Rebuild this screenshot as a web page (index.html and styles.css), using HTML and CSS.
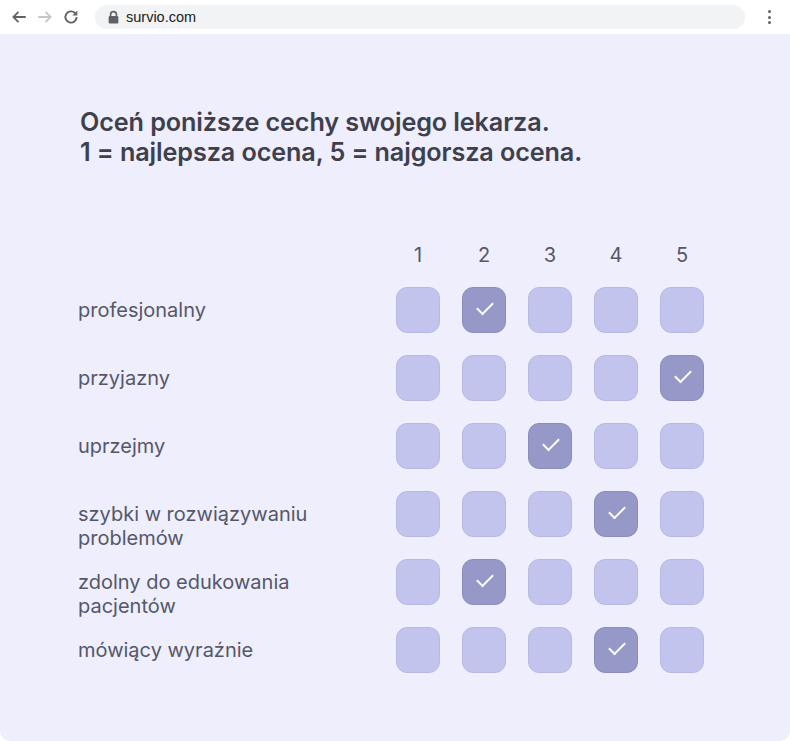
FILE: index.html
```html
<!DOCTYPE html>
<html lang="pl">
<head>
<meta charset="utf-8">
<title>survio.com</title>
<link rel="stylesheet" href="styles.css">
</head>
<body>
<div class="browser">
  <header class="toolbar">
    <div class="nav">
      <svg class="nav-icon" width="18" height="18" viewBox="0 0 16 16"><path d="M14 8H3M7.5 3.5L3 8l4.5 4.5" fill="none" stroke="#5f6368" stroke-width="1.6"/></svg>
      <svg class="nav-icon" width="18" height="18" viewBox="0 0 16 16"><path d="M2 8h11M8.5 3.5L13 8l-4.5 4.5" fill="none" stroke="#c4c7cc" stroke-width="1.6"/></svg>
      <svg class="nav-icon" width="18" height="18" viewBox="0 0 16 16"><path d="M13 8a5 5 0 1 1-1.5-3.6" fill="none" stroke="#5f6368" stroke-width="1.7"/><path d="M13.6 2.2v4.4H9.2z" fill="#5f6368"/></svg>
    </div>
    <div class="omnibox">
      <svg class="lock" width="11" height="14" viewBox="0 0 10 13"><path d="M2.3 6V4.2a2.7 2.7 0 0 1 5.4 0V6" fill="none" stroke="#5f6368" stroke-width="1.5"/><rect x="0.5" y="5.6" width="9" height="7" rx="1.2" fill="#5f6368"/></svg>
      <span class="url">survio.com</span>
    </div>
    <div class="menu"><span></span><span></span><span></span></div>
  </header>
  <main class="page">
    <h1 class="question">Oceń poniższe cechy swojego lekarza.<br>1 = najlepsza ocena, 5 = najgorsza ocena.</h1>
    <div class="matrix">
      <div class="head">
        <span class="num">1</span><span class="num">2</span><span class="num">3</span><span class="num">4</span><span class="num">5</span>
      </div>
      <div class="grid">
        <div class="label">profesjonalny</div>
        <div class="opts"><span class="box"></span><span class="box on"></span><span class="box"></span><span class="box"></span><span class="box"></span></div>
        <div class="label">przyjazny</div>
        <div class="opts"><span class="box"></span><span class="box"></span><span class="box"></span><span class="box"></span><span class="box on"></span></div>
        <div class="label">uprzejmy</div>
        <div class="opts"><span class="box"></span><span class="box"></span><span class="box on"></span><span class="box"></span><span class="box"></span></div>
        <div class="label">szybki w rozwiązywaniu<br>problemów</div>
        <div class="opts"><span class="box"></span><span class="box"></span><span class="box"></span><span class="box on"></span><span class="box"></span></div>
        <div class="label">zdolny do edukowania<br>pacjentów</div>
        <div class="opts"><span class="box"></span><span class="box on"></span><span class="box"></span><span class="box"></span><span class="box"></span></div>
        <div class="label">mówiący wyraźnie</div>
        <div class="opts"><span class="box"></span><span class="box"></span><span class="box"></span><span class="box on"></span><span class="box"></span></div>
      </div>
    </div>
  </main>
</div>
</body>
</html>
```
FILE: styles.css
```css
* { box-sizing: border-box; }
html, body { margin: 0; padding: 0; background: #ffffff; }
body { font-family: Inter, "Noto Sans", sans-serif; }

.browser { width: 790px; height: 741px; display: flex; flex-direction: column; }

.toolbar {
  height: 34px;
  flex: 0 0 34px;
  display: flex;
  align-items: center;
  background: #ffffff;
  padding: 0 0 0 10px;
}
.nav { display: flex; align-items: center; gap: 8px; }
.nav-icon { display: block; }
.omnibox {
  margin-left: 15px;
  width: 650px;
  height: 24px;
  border-radius: 12px;
  background: #f1f3f4;
  display: flex;
  align-items: center;
  padding-left: 13px;
}
.lock { display: block; margin-top: -1px; }
.url {
  margin-left: 7px;
  font-family: "Liberation Sans", Arial, sans-serif;
  font-size: 14.5px;
  color: #202124;
}
.menu {
  margin-left: 23px;
  display: flex;
  flex-direction: column;
  gap: 2.5px;
}
.menu span { width: 3px; height: 3px; border-radius: 50%; background: #5f6368; display: block; }

.page {
  flex: 1;
  background: #eeeefc;
  border-radius: 0 0 10px 10px;
  padding: 73px 0 0 78px;
}
.question {
  margin: 0 0 0 2px;
  font-size: 25.2px;
  line-height: 30px;
  font-weight: 600;
  color: #3e404c;
  letter-spacing: -0.1px;
}
.matrix { margin-top: 76px; }
.head {
  display: flex;
  gap: 22px;
  margin-left: 318px;
  height: 24px;
  margin-bottom: 20px;
}
.num {
  width: 44px;
  text-align: center;
  font-size: 20px;
  line-height: 24px;
  color: #555769;
}
.grid {
  display: grid;
  grid-template-columns: 318px auto;
  grid-auto-rows: 46px;
  row-gap: 22px;
}
.label {
  padding-top: 11px;
  font-size: 20px;
  line-height: 24px;
  color: #555769;
  white-space: nowrap;
}
.opts { display: flex; gap: 22px; }
.box {
  width: 44px;
  height: 46px;
  border-radius: 11px;
  background: #c3c4ee;
  border: 1px solid #b8b9e2;
  display: block;
  position: relative;
}
.box.on { background: #9698c8; border-color: #8b8dbd; }
.box.on::after {
  content: "";
  position: absolute;
  left: 14px;
  top: 14px;
  width: 14px;
  height: 7px;
  border-left: 2.6px solid #ffffff;
  border-bottom: 2.6px solid #ffffff;
  transform: rotate(-45deg);
  transform-origin: center;
}
```
